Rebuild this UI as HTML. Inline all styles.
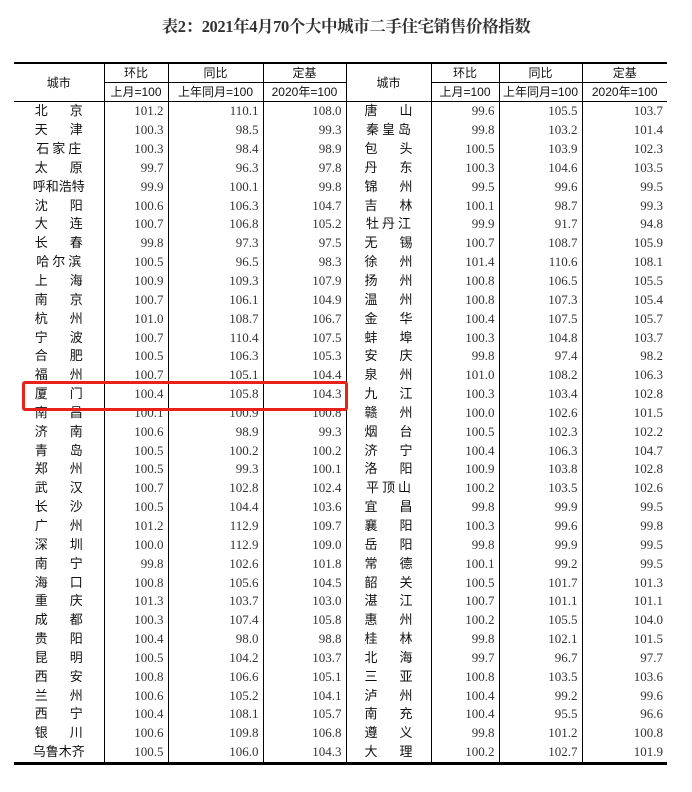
<!DOCTYPE html>
<html><head><meta charset="utf-8"><style>
body{margin:0;width:692px;height:792px;background:#fff;position:relative;overflow:hidden;font-family:"Liberation Serif","Noto Serif CJK SC",serif;color:#222}
.t{position:absolute;left:0;width:692px;top:13px;text-align:center;font-weight:bold;font-size:16.5px;color:#333;letter-spacing:-0.4px}
table{position:absolute;left:14px;top:62px;width:653px;border-collapse:collapse;table-layout:fixed;border-top:2px solid #000;border-bottom:3px solid #000}
td{padding:0;height:18.85px;line-height:18px;font-size:13px;white-space:nowrap;overflow:hidden}
thead td{text-align:center;font-family:"Liberation Sans","Noto Sans CJK SC",sans-serif;font-size:12px;color:#111;border-left:1px solid #000;border-bottom:1px solid #000;height:18px}
thead td.f{border-left:none}
tbody td{text-align:right;padding-right:4px;color:#333;border-left:1px solid #000}
tbody td.c{text-align:center;padding:0;font-family:"Liberation Sans","Noto Sans CJK SC",sans-serif;color:#111;border-left:1px solid #000}
tbody td.c.f{border-left:none}
.s{letter-spacing:22px;margin-right:-22px}
.s3{letter-spacing:3px;margin-right:-3px}
.box{position:absolute;left:22px;top:381px;width:320px;height:24px;border:3px solid #e8221b;border-radius:3px}
</style></head><body>
<div class="t">表2：2021年4月70个大中城市二手住宅销售价格指数</div>
<table>
<colgroup><col style="width:90px"><col style="width:64px"><col style="width:95px"><col style="width:83px"><col style="width:85px"><col style="width:68px"><col style="width:83px"><col style="width:85px"></colgroup>
<thead>
<tr><td class="f" rowspan="2" style="height:37px">城市</td><td>环比</td><td>同比</td><td>定基</td><td rowspan="2">城市</td><td>环比</td><td>同比</td><td>定基</td></tr>
<tr><td>上月=100</td><td>上年同月=100</td><td>2020年=100</td><td>上月=100</td><td>上年同月=100</td><td>2020年=100</td></tr>
</thead>
<tbody>
<tr><td class="c f"><span class="s">北京</span></td><td>101.2</td><td>110.1</td><td>108.0</td><td class="c"><span class="s">唐山</span></td><td>99.6</td><td>105.5</td><td>103.7</td></tr>
<tr><td class="c f"><span class="s">天津</span></td><td>100.3</td><td>98.5</td><td>99.3</td><td class="c"><span class="s3">秦皇岛</span></td><td>99.8</td><td>103.2</td><td>101.4</td></tr>
<tr><td class="c f"><span class="s3">石家庄</span></td><td>100.3</td><td>98.4</td><td>98.9</td><td class="c"><span class="s">包头</span></td><td>100.5</td><td>103.9</td><td>102.3</td></tr>
<tr><td class="c f"><span class="s">太原</span></td><td>99.7</td><td>96.3</td><td>97.8</td><td class="c"><span class="s">丹东</span></td><td>100.3</td><td>104.6</td><td>103.5</td></tr>
<tr><td class="c f">呼和浩特</td><td>99.9</td><td>100.1</td><td>99.8</td><td class="c"><span class="s">锦州</span></td><td>99.5</td><td>99.6</td><td>99.5</td></tr>
<tr><td class="c f"><span class="s">沈阳</span></td><td>100.6</td><td>106.3</td><td>104.7</td><td class="c"><span class="s">吉林</span></td><td>100.1</td><td>98.7</td><td>99.3</td></tr>
<tr><td class="c f"><span class="s">大连</span></td><td>100.7</td><td>106.8</td><td>105.2</td><td class="c"><span class="s3">牡丹江</span></td><td>99.9</td><td>91.7</td><td>94.8</td></tr>
<tr><td class="c f"><span class="s">长春</span></td><td>99.8</td><td>97.3</td><td>97.5</td><td class="c"><span class="s">无锡</span></td><td>100.7</td><td>108.7</td><td>105.9</td></tr>
<tr><td class="c f"><span class="s3">哈尔滨</span></td><td>100.5</td><td>96.5</td><td>98.3</td><td class="c"><span class="s">徐州</span></td><td>101.4</td><td>110.6</td><td>108.1</td></tr>
<tr><td class="c f"><span class="s">上海</span></td><td>100.9</td><td>109.3</td><td>107.9</td><td class="c"><span class="s">扬州</span></td><td>100.8</td><td>106.5</td><td>105.5</td></tr>
<tr><td class="c f"><span class="s">南京</span></td><td>100.7</td><td>106.1</td><td>104.9</td><td class="c"><span class="s">温州</span></td><td>100.8</td><td>107.3</td><td>105.4</td></tr>
<tr><td class="c f"><span class="s">杭州</span></td><td>101.0</td><td>108.7</td><td>106.7</td><td class="c"><span class="s">金华</span></td><td>100.4</td><td>107.5</td><td>105.7</td></tr>
<tr><td class="c f"><span class="s">宁波</span></td><td>100.7</td><td>110.4</td><td>107.5</td><td class="c"><span class="s">蚌埠</span></td><td>100.3</td><td>104.8</td><td>103.7</td></tr>
<tr><td class="c f"><span class="s">合肥</span></td><td>100.5</td><td>106.3</td><td>105.3</td><td class="c"><span class="s">安庆</span></td><td>99.8</td><td>97.4</td><td>98.2</td></tr>
<tr><td class="c f"><span class="s">福州</span></td><td>100.7</td><td>105.1</td><td>104.4</td><td class="c"><span class="s">泉州</span></td><td>101.0</td><td>108.2</td><td>106.3</td></tr>
<tr><td class="c f"><span class="s">厦门</span></td><td>100.4</td><td>105.8</td><td>104.3</td><td class="c"><span class="s">九江</span></td><td>100.3</td><td>103.4</td><td>102.8</td></tr>
<tr><td class="c f"><span class="s">南昌</span></td><td>100.1</td><td>100.9</td><td>100.8</td><td class="c"><span class="s">赣州</span></td><td>100.0</td><td>102.6</td><td>101.5</td></tr>
<tr><td class="c f"><span class="s">济南</span></td><td>100.6</td><td>98.9</td><td>99.3</td><td class="c"><span class="s">烟台</span></td><td>100.5</td><td>102.3</td><td>102.2</td></tr>
<tr><td class="c f"><span class="s">青岛</span></td><td>100.5</td><td>100.2</td><td>100.2</td><td class="c"><span class="s">济宁</span></td><td>100.4</td><td>106.3</td><td>104.7</td></tr>
<tr><td class="c f"><span class="s">郑州</span></td><td>100.5</td><td>99.3</td><td>100.1</td><td class="c"><span class="s">洛阳</span></td><td>100.9</td><td>103.8</td><td>102.8</td></tr>
<tr><td class="c f"><span class="s">武汉</span></td><td>100.7</td><td>102.8</td><td>102.4</td><td class="c"><span class="s3">平顶山</span></td><td>100.2</td><td>103.5</td><td>102.6</td></tr>
<tr><td class="c f"><span class="s">长沙</span></td><td>100.5</td><td>104.4</td><td>103.6</td><td class="c"><span class="s">宜昌</span></td><td>99.8</td><td>99.9</td><td>99.5</td></tr>
<tr><td class="c f"><span class="s">广州</span></td><td>101.2</td><td>112.9</td><td>109.7</td><td class="c"><span class="s">襄阳</span></td><td>100.3</td><td>99.6</td><td>99.8</td></tr>
<tr><td class="c f"><span class="s">深圳</span></td><td>100.0</td><td>112.9</td><td>109.0</td><td class="c"><span class="s">岳阳</span></td><td>99.8</td><td>99.9</td><td>99.5</td></tr>
<tr><td class="c f"><span class="s">南宁</span></td><td>99.8</td><td>102.6</td><td>101.8</td><td class="c"><span class="s">常德</span></td><td>100.1</td><td>99.2</td><td>99.5</td></tr>
<tr><td class="c f"><span class="s">海口</span></td><td>100.8</td><td>105.6</td><td>104.5</td><td class="c"><span class="s">韶关</span></td><td>100.5</td><td>101.7</td><td>101.3</td></tr>
<tr><td class="c f"><span class="s">重庆</span></td><td>101.3</td><td>103.7</td><td>103.0</td><td class="c"><span class="s">湛江</span></td><td>100.7</td><td>101.1</td><td>101.1</td></tr>
<tr><td class="c f"><span class="s">成都</span></td><td>100.3</td><td>107.4</td><td>105.8</td><td class="c"><span class="s">惠州</span></td><td>100.2</td><td>105.5</td><td>104.0</td></tr>
<tr><td class="c f"><span class="s">贵阳</span></td><td>100.4</td><td>98.0</td><td>98.8</td><td class="c"><span class="s">桂林</span></td><td>99.8</td><td>102.1</td><td>101.5</td></tr>
<tr><td class="c f"><span class="s">昆明</span></td><td>100.5</td><td>104.2</td><td>103.7</td><td class="c"><span class="s">北海</span></td><td>99.7</td><td>96.7</td><td>97.7</td></tr>
<tr><td class="c f"><span class="s">西安</span></td><td>100.8</td><td>106.6</td><td>105.1</td><td class="c"><span class="s">三亚</span></td><td>100.8</td><td>103.5</td><td>103.6</td></tr>
<tr><td class="c f"><span class="s">兰州</span></td><td>100.6</td><td>105.2</td><td>104.1</td><td class="c"><span class="s">泸州</span></td><td>100.4</td><td>99.2</td><td>99.6</td></tr>
<tr><td class="c f"><span class="s">西宁</span></td><td>100.4</td><td>108.1</td><td>105.7</td><td class="c"><span class="s">南充</span></td><td>100.4</td><td>95.5</td><td>96.6</td></tr>
<tr><td class="c f"><span class="s">银川</span></td><td>100.6</td><td>109.8</td><td>106.8</td><td class="c"><span class="s">遵义</span></td><td>99.8</td><td>101.2</td><td>100.8</td></tr>
<tr><td class="c f">乌鲁木齐</td><td>100.5</td><td>106.0</td><td>104.3</td><td class="c"><span class="s">大理</span></td><td>100.2</td><td>102.7</td><td>101.9</td></tr>
</tbody>
</table>
<div class="box"></div>
</body></html>
